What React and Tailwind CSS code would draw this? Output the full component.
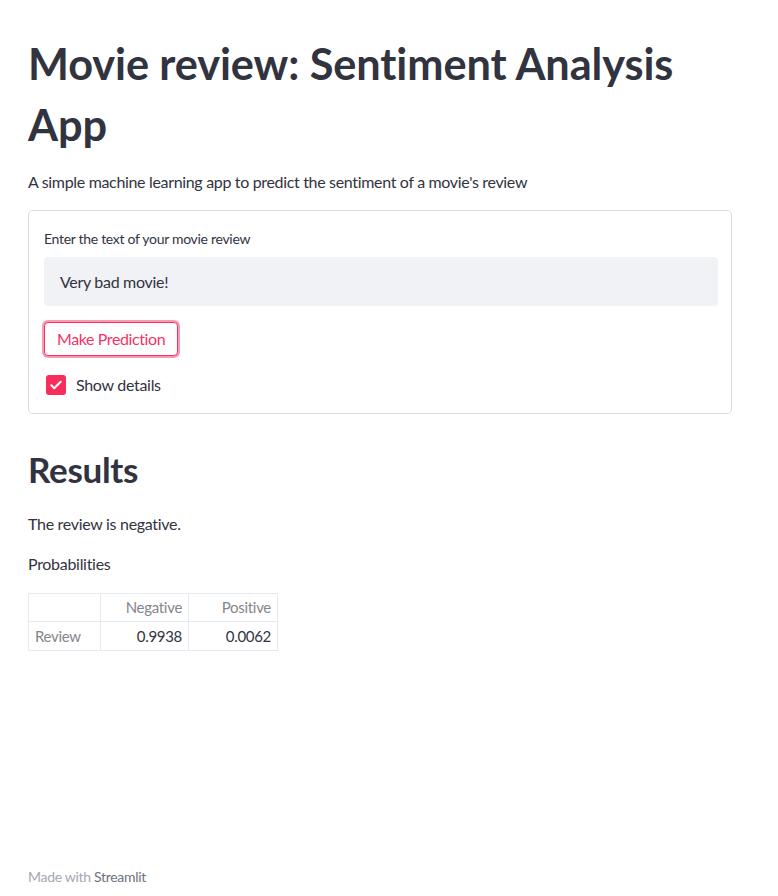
import React from "react";

export default function App() {
  return (
    <div
      className="relative min-h-[896px] bg-white text-[#31333f]"
      style={{ fontFamily: '"Lato", "Noto Sans", sans-serif' }}
    >
      <div className="ml-[28px] w-[704px]">
        <h1 className="pt-[33px] text-[43.3px] font-bold leading-[61px] tracking-[-0.1px]">
          Movie review: Sentiment Analysis App
        </h1>
        <p className="mt-[15px] text-[16px] leading-[24px] tracking-[-0.33px]">
          A simple machine learning app to predict the sentiment of a movie's review
        </p>

        <div className="mt-[16px] rounded-[5px] border border-[#dcdde2] pl-[15px] pr-[13px] pt-[18px] pb-[16px]">
          <div className="text-[14px] leading-[20px] tracking-[-0.3px]">Enter the text of your movie review</div>
          <div className="mt-[8px] flex h-[49px] items-center rounded-[4px] bg-[#f0f2f6] px-[16px] text-[16px] tracking-[-0.3px]">
            Very bad movie!
          </div>
          <div className="mt-[16px] flex">
            <button className="flex h-[34px] items-center rounded-[4px] border border-[#f63366] bg-white px-[12px] text-[16px] tracking-[-0.4px] text-[#f63366] shadow-[0_0_0_2px_rgba(246,51,102,0.5)]">
              Make Prediction
            </button>
          </div>
          <div className="mt-[17px] flex items-center">
            <div className="ml-[2px] flex h-[20px] w-[20px] items-center justify-center rounded-[3px] bg-[#f72d5c]">
              <svg width="14" height="14" viewBox="0 0 24 24" fill="none" stroke="white" strokeWidth="3.6" strokeLinecap="round" strokeLinejoin="round">
                <path d="M4 12.5l5 5L20 6.5" />
              </svg>
            </div>
            <span className="ml-[10px] text-[16px] leading-[24px] tracking-[-0.3px]">Show details</span>
          </div>
        </div>

        <h2 className="mt-[33px] text-[35px] font-bold leading-[44px] tracking-[-0.3px]">Results</h2>
        <p className="mt-[21px] text-[16px] leading-[24px] tracking-[-0.3px]">The review is negative.</p>
        <p className="mt-[16px] text-[16px] leading-[24px] tracking-[-0.3px]">Probabilities</p>

        <table className="mt-[17px] border-collapse text-[15px] tracking-[-0.3px]">
          <thead>
            <tr className="h-[28px]">
              <th className="w-[72px] border border-[#e6e9ef] px-[6px] font-normal"></th>
              <th className="w-[88px] border border-[#e6e9ef] px-[6px] text-right font-normal text-[#85868c]">Negative</th>
              <th className="w-[89px] border border-[#e6e9ef] px-[6px] text-right font-normal text-[#85868c]">Positive</th>
            </tr>
          </thead>
          <tbody>
            <tr className="h-[29px]">
              <td className="border border-[#e6e9ef] px-[6px] text-left text-[#85868c]">Review</td>
              <td className="border border-[#e6e9ef] px-[6px] text-right">0.9938</td>
              <td className="border border-[#e6e9ef] px-[6px] text-right">0.0062</td>
            </tr>
          </tbody>
        </table>
      </div>

      <div className="absolute left-[28px] top-[867px] text-[14px] leading-[20px] tracking-[-0.3px]">
        <span className="text-[#a4a7b2]">Made with </span>
        <span className="text-[#6e717c]">Streamlit</span>
      </div>
    </div>
  );
}
